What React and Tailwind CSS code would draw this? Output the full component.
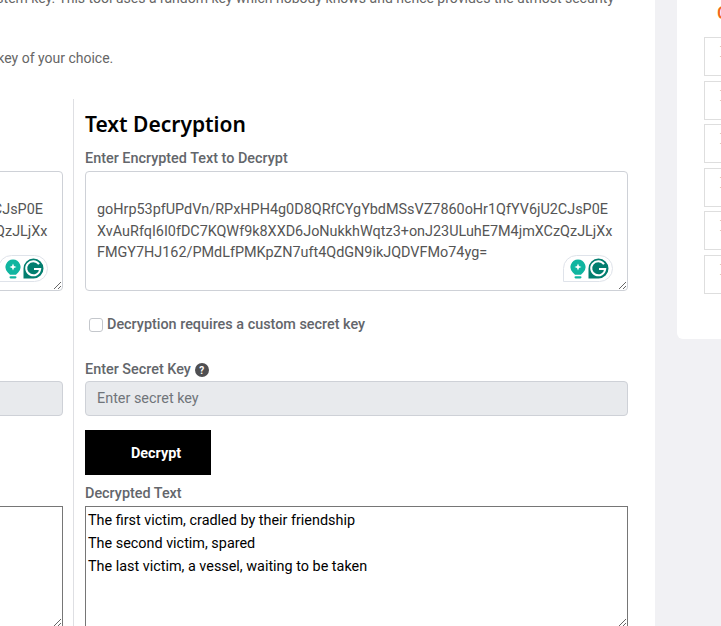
const cipher = `goHrp53pfUPdVn/RPxHPH4g0D8QRfCYgYbdMSsVZ7860oHr1QfYV6jU2CJsP0E
XvAuRfqI6I0fDC7KQWf9k8XXD6JoNukkhWqtz3+onJ23ULuhE7M4jmXCzQzJLjXx
FMGY7HJ162/PMdLfPMKpZN7uft4QdGN9ikJQDVFMo74yg=`;

const plain = `The first victim, cradled by their friendship
The second victim, spared
The last victim, a vessel, waiting to be taken`;

function GrammarlyBadge() {
  return (
    <div className="absolute right-[15px] bottom-[9px] flex h-[27px] w-[50px] items-center justify-between rounded-[14px] rounded-bl-none border border-[#dfe3ea] bg-white pl-[6px] pr-[3px]">
      <svg width="16" height="20" viewBox="0 0 16 20">
        <path d="M8 0.5 A7.5 7.5 0 0 1 13.2 13.4 C12.2 14.4 11.6 15.2 11 15.8 L5 15.8 C4.4 15.2 3.8 14.4 2.8 13.4 A7.5 7.5 0 0 1 8 0.5 Z" fill="#10b5a0" />
        <path d="M8 4.5 L9 7 L11.5 8 L9 9 L8 11.5 L7 9 L4.5 8 L7 7 Z" fill="#fff" />
        <rect x="4.5" y="17.2" width="7" height="2.2" rx="1.1" fill="#10b5a0" />
      </svg>
      <svg width="21" height="21" viewBox="0 0 21 21">
        <path d="M10.5 0.5 A10 10 0 0 1 10.5 20.5 L0.5 20.5 L0.5 10.5 A10 10 0 0 1 10.5 0.5 Z" fill="#027e6f" />
        <path d="M16 6.3 A7 7 0 1 0 17.2 11 L11 11" fill="none" stroke="#fff" strokeWidth="2" />
      </svg>
    </div>
  );
}

function Column({ title, label, value, checkLabel, button, resultLabel, result, border }) {
  return (
    <div className={`w-[565px] shrink-0 pr-[10px] ${border ? "border-l border-[#dedfe3] pl-[11px]" : "pl-[12px]"}`}>
      <h2 className="mt-[10px] font-['Noto_Sans',sans-serif] text-[21px] leading-[30px] font-semibold text-black">{title}</h2>
      <label className="mt-[9px] block text-[14.4px] leading-[22px] font-medium text-[#63666b]">{label}</label>
      <div className="relative mt-[1px] h-[120px]">
        <textarea
          readOnly
          defaultValue={value}
          className="block h-[120px] w-full rounded-[4px] border border-[#ced1d7] bg-white px-[11px] pt-[27px] text-[14.4px] leading-[21.6px] whitespace-pre text-[#555] outline-none"
        />
        <GrammarlyBadge />
      </div>
      <label className="mt-[24px] flex h-[20px] items-center pl-[4px] text-[14.4px] font-medium text-[#63666b]">
        <span className="mr-[4px] h-[14px] w-[14px] rounded-[3px] border border-[#c4c7cc] bg-white" />
        {checkLabel}
      </label>
      <div className="mt-[25px] flex h-[20px] items-center gap-[4px] text-[14.4px] font-medium text-[#63666b]">
        Enter Secret Key
        <span className="flex h-[14px] w-[14px] items-center justify-center rounded-full bg-[#4f4f52] text-[10px] font-bold text-white">?</span>
      </div>
      <input
        placeholder="Enter secret key"
        className="mt-[1px] block h-[35px] w-full rounded-[4px] border border-[#ced1d7] bg-[#e8eaed] px-[11px] text-[14.4px] text-[#555] outline-none placeholder:text-[#70757a]"
      />
      <button className="mt-[14px] block h-[45px] w-[126px] bg-black pt-[2px] pl-[16px] text-[14.4px] font-bold text-white">{button}</button>
      <label className="mt-[9px] block text-[14.4px] leading-[20px] font-medium text-[#63666b]">{resultLabel}</label>
      <textarea
        readOnly
        defaultValue={result}
        className="mt-[2px] block h-[122px] w-full border border-[#767676] bg-white px-[2px] pt-[2px] text-[14.4px] leading-[23.04px] text-black outline-none"
      />
    </div>
  );
}

export default function App() {
  return (
    <div className="flex h-[626px] w-[721px] overflow-hidden bg-[#f1f1f4] font-['Roboto',sans-serif]">
      <main className="h-full w-[655px] shrink-0 overflow-hidden bg-white">
        <div className="-ml-[492px] w-[1147px]">
          <p className="-mt-[14px] whitespace-nowrap pr-[41px] pl-[12px] text-right text-[14px] leading-[24px] text-[#666]">
            Encrypt text with a system key. This tool uses a random key which nobody knows and hence provides the utmost security
          </p>
          <p className="mt-[36px] h-[24px] pl-[492px] text-[14px] leading-[24px] text-[#666]">
            <span className="-ml-[41px]">Use a key of your choice.</span>
          </p>
          <div className="mt-[29px] flex">
            <Column
              title="Text Encryption"
              label="Enter Plain Text to Encrypt"
              value={cipher}
              checkLabel="Use a custom secret key"
              button="Encrypt"
              resultLabel="Encrypted Text"
              result=""
            />
            <Column
              border
              title="Text Decryption"
              label="Enter Encrypted Text to Decrypt"
              value={cipher}
              checkLabel="Decryption requires a custom secret key"
              button="Decrypt"
              resultLabel="Decrypted Text"
              result={plain}
            />
          </div>
        </div>
      </main>
      <aside className="ml-[22px] h-[339px] w-[200px] shrink-0 rounded-bl-[6px] bg-white pl-[27px]">
        <div className="h-[37px] pt-[3px] pl-[13px] text-[18px] leading-[20px] font-medium text-[#f26a1b]">Categories</div>
        <div className="flex flex-col gap-[4.6px]">
          {[0, 1, 2, 3, 4, 5].map((i) => (
            <div key={i} className="h-[39px] border border-[#dedede] pt-[8px] pl-[15px] text-[10px] leading-[10px] text-[#aaa]">
              <div>Tools</div>
              <div>Tools</div>
            </div>
          ))}
        </div>
      </aside>
    </div>
  );
}
